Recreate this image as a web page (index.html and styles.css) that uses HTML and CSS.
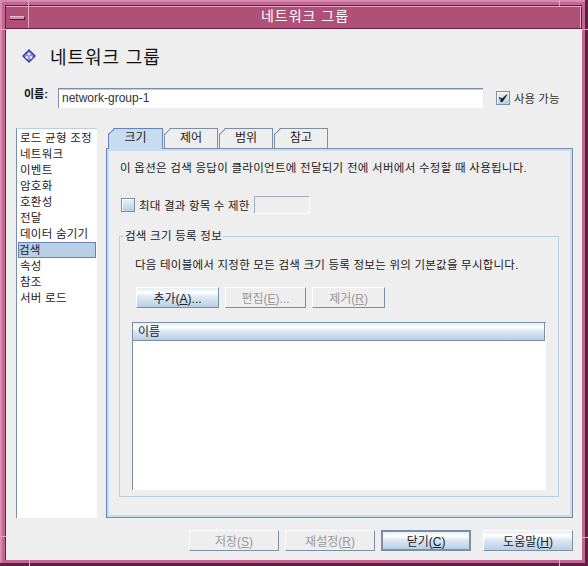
FILE: index.html
```html
<!DOCTYPE html>
<html lang="ko">
<head>
  <meta charset="UTF-8">
  <title>네트워크 그룹</title>
  <link rel="stylesheet" href="styles.css">
</head>
<body>

  <div class="window">
    <span class="tick tick-v" style="left:28px;top:0"></span>
    <span class="tick tick-v" style="left:559px;top:0"></span>
    <span class="tick tick-v" style="left:29px;top:560px"></span>
    <span class="tick tick-v" style="left:559px;top:560px"></span>
    <span class="tick tick-h" style="left:0;top:29px"></span>
    <span class="tick tick-h" style="left:582px;top:29px"></span>
    <span class="tick tick-h" style="left:0;top:536px"></span>
    <span class="tick tick-h" style="left:582px;top:537px"></span>

    <div class="titlebar">
      <div class="menu-box"><span class="menu-btn"></span></div>
      <div class="title">네트워크 그룹</div>
    </div>

    <div class="content">
      <div class="heading">
        <svg class="heading-icon" width="14" height="14" viewBox="0 0 14 14">
          <path d="M7 0L14 7L7 14L0 7Z" fill="#3c3ca8"/>
          <path d="M7 2L12 7L7 12L2 7Z" fill="#8e8ed8"/>
          <circle cx="7" cy="5" r="1.3" fill="#e8e8ff"/>
          <circle cx="5" cy="8.4" r="1.3" fill="#e8e8ff"/>
          <circle cx="9" cy="8.4" r="1.3" fill="#e8e8ff"/>
        </svg>
        <h1>네트워크 그룹</h1>
      </div>

      <div class="name-row">
        <label class="name-label">이름:</label>
        <div class="text-input name-input">network-group-1</div>
        <span class="check checked">
          <svg width="12" height="12" viewBox="0 0 12 12"><path d="M2 5L4 6L5 6.5L9.5 2.5L10.5 2.5L5.5 10L3.5 10L3.5 7.5L2 6.5Z" fill="#222"/></svg>
        </span>
        <span class="check-label">사용 가능</span>
      </div>

      <div class="main">
        <ul class="side-list">
          <li>로드 균형 조정</li>
          <li>네트워크</li>
          <li>이벤트</li>
          <li>암호화</li>
          <li>호환성</li>
          <li>전달</li>
          <li>데이터 숨기기</li>
          <li class="selected">검색</li>
          <li>속성</li>
          <li>참조</li>
          <li>서버 로드</li>
        </ul>

        <div class="tabs-area">
          <div class="tabs">
            <div class="tab active">크기</div>
            <div class="tab">제어</div>
            <div class="tab">범위</div>
            <div class="tab">참고</div>
          </div>

          <div class="panel">
            <p class="intro">이 옵션은 검색 응답이 클라이언트에 전달되기 전에 서버에서 수정할 때 사용됩니다.</p>

            <div class="limit-row">
              <span class="check"></span>
              <span class="limit-label">최대 결과 항목 수 제한</span>
              <div class="text-input limit-input"></div>
            </div>

            <fieldset class="group">
              <legend>검색 크기 등록 정보</legend>
              <p class="group-text">다음 테이블에서 지정한 모든 검색 크기 등록 정보는 위의 기본값을 무시합니다.</p>
              <div class="group-buttons">
                <button class="btn btn-add">추가(<u>A</u>)...</button>
                <button class="btn btn-edit" disabled>편집(<u>E</u>)...</button>
                <button class="btn btn-remove" disabled>제거(<u>R</u>)</button>
              </div>
              <div class="table">
                <div class="table-head">이름</div>
              </div>
            </fieldset>
          </div>
        </div>
      </div>

      <div class="footer">
        <button class="btn btn-foot" disabled>저장(<u>S</u>)</button>
        <button class="btn btn-foot" disabled>재설정(<u>R</u>)</button>
        <button class="btn btn-foot btn-default">닫기(<u>C</u>)</button>
        <button class="btn btn-foot btn-help">도움말(<u>H</u>)</button>
      </div>
    </div>
  </div>

</body>
</html>
```

FILE: styles.css
```css
* {
  box-sizing: border-box;
}

body {
  margin: 0;
  padding: 0;
  font-family: "Liberation Sans", "Noto Sans CJK KR", sans-serif;
  font-size: 12px;
  color: #222;
}

.window {
  position: relative;
  width: 588px;
  height: 566px;
  display: flex;
  flex-direction: column;
  padding: 5px 6px 6px 5px;
  background: #c4668f;
  box-shadow: inset -3px -3px 0 #5c2045, inset 2px 2px 0 #d68cb0;
  overflow: hidden;
}

.tick {
  position: absolute;
  background: #e0a8c4;
}

.tick-v {
  width: 1px;
  height: 6px;
}

.tick-h {
  width: 6px;
  height: 1px;
}

.titlebar {
  height: 24px;
  display: flex;
  flex-shrink: 0;
  background: #b04f78;
  border-top: 1px solid #5c2045;
  border-left: 1px solid #5c2045;
  border-bottom: 1px solid #5c2045;
}

.menu-box {
  width: 23px;
  border-right: 1px solid #e0a8c4;
  border-top: 1px solid #e0a8c4;
  display: flex;
  align-items: center;
  padding-left: 4px;
}

.menu-btn {
  width: 15px;
  height: 4px;
  background: #d68cb0;
  border-bottom: 1px solid #4a1a38;
  border-right: 1px solid #4a1a38;
  border-top: 1px solid #e8bcd2;
}

.title {
  flex: 1;
  border-top: 1px solid #e0a8c4;
  border-right: 1px solid #5c2045;
  box-shadow: inset -1px 0 0 #e0a8c4;
  text-align: center;
  color: #fff;
  font-size: 14px;
  line-height: 19px;
  letter-spacing: 1px;
}

.content {
  flex: 1;
  padding: 0 9px 0 10px;
  display: flex;
  flex-direction: column;
  background: #eeeeee;
  border-left: 1px solid #5c2045;
}

.heading {
  display: flex;
  align-items: center;
  gap: 14px;
  height: 24px;
  margin-top: 15px;
  padding-left: 6px;
}

.heading h1 {
  margin: 0;
  font-size: 18px;
  font-weight: normal;
  letter-spacing: 0.9px;
  color: #111;
}

.name-row {
  display: flex;
  align-items: center;
  height: 20px;
  margin-top: 20px;
}

.name-label {
  width: 42px;
  padding-left: 8px;
  margin-top: -10px;
  font-size: 11px;
  font-weight: bold;
  color: #111;
}

.text-input {
  background: #fff;
  border-top: 1px solid #7a8ea8;
  border-left: 1px solid #7a8ea8;
  box-shadow: inset 0 1px 0 #b8cfe5;
}

.name-input {
  width: 425px;
  height: 20px;
  padding: 1px 3px;
  line-height: 17px;
  font-size: 12px;
  color: #333;
}

.check {
  flex-shrink: 0;
  width: 14px;
  height: 14px;
  display: flex;
  align-items: center;
  justify-content: center;
  border: 1px solid #7a8ea8;
  background: linear-gradient(#eaf1f8, #b8cfe5);
  box-shadow: inset 1px 1px 0 #fff;
}

.name-row .check {
  margin-left: 13px;
}

.check-label {
  margin-left: 4px;
  font-size: 11.5px;
  color: #333;
}

.main {
  display: flex;
  margin-top: 20px;
  gap: 9px;
  height: 390px;
}

.side-list {
  width: 81px;
  margin: 0;
  padding: 1px 0 0 1px;
  list-style: none;
  background: #fff;
  border-top: 1px solid #b8cfe5;
  border-left: 1px solid #7a8ea8;
}

.side-list li {
  height: 16px;
  padding-left: 2px;
  line-height: 16px;
  font-size: 11.5px;
  letter-spacing: 0.25px;
  color: #222;
  white-space: nowrap;
}

.side-list li.selected {
  width: 78px;
  padding-left: 1px;
  background: #b8cfe5;
  outline: 1px solid #6382bf;
  outline-offset: -1px;
}

.tabs-area {
  flex: 1;
  display: flex;
  flex-direction: column;
}

.tabs {
  display: flex;
  height: 20px;
  padding-left: 2px;
  gap: 1px;
}

.tab {
  position: relative;
  width: 54px;
  height: 20px;
  text-align: center;
  line-height: 18px;
  font-size: 12px;
  color: #222;
  background: #eeeeee;
  border-top: 1px solid #7a8ea8;
  border-right: 1px solid #7a8ea8;
  border-left: 1px solid #7a8ea8;
  clip-path: polygon(6px 0, 100% 0, 100% 100%, 0 100%, 0 6px);
}

.tab::before {
  content: "";
  position: absolute;
  left: -2px;
  top: 2px;
  width: 9px;
  height: 1px;
  background: #7a8ea8;
  transform: rotate(-45deg);
}

.tab.active {
  width: 55px;
  background: #c7dcf0;
  border-color: #6382bf;
  border-bottom: none;
  z-index: 1;
  height: 21px;
}

.tab.active::before {
  background: #6382bf;
}

.panel {
  width: 467px;
  height: 370px;
  padding: 0 13px;
  border: 1px solid #7a8ea8;
  border-left-color: #6382bf;
  box-shadow: inset 2px 2px 0 #c7dcf0, inset -2px -2px 0 #c7dcf0;
}

.intro {
  margin: 11px 0 0;
  line-height: 16px;
  font-size: 11.5px;
  letter-spacing: 0.27px;
  white-space: nowrap;
}

.limit-row {
  display: flex;
  align-items: center;
  height: 18px;
  margin-top: 20px;
  padding-left: 1px;
}

.limit-label {
  margin-left: 4px;
  font-size: 11.5px;
  letter-spacing: 0.2px;
}

.limit-input {
  width: 56px;
  height: 18px;
  margin-left: 4px;
  background: #eeeeee;
  border: 1px solid #fff;
  border-top-color: #9fb0c4;
  border-left-color: #9fb0c4;
  box-shadow: none;
}

.group {
  width: 440px;
  height: 268px;
  margin: 15px 0 0 -1px;
  padding: 0 12px 12px 12px;
  border: 1px solid #b8cfe5;
  min-width: 0;
}

.group legend {
  padding: 0 1px;
  margin-left: -8px;
  line-height: 14px;
  font-size: 11.5px;
  letter-spacing: 0.25px;
}

.group-text {
  margin: 14px 0 0 3px;
  line-height: 16px;
  font-size: 11.5px;
  letter-spacing: 0.23px;
  white-space: nowrap;
}

.group-buttons {
  display: flex;
  gap: 6px;
  margin: 14px 0 0 4px;
}

.btn {
  height: 21px;
  padding: 0;
  font-family: inherit;
  font-size: 12px;
  color: #222;
  background: linear-gradient(#e4edf6 0, #fff 25%, #dfe9f3 45%, #b8cfe5 100%);
  border: 1px solid #fff;
  border-right-color: #7a8ea8;
  border-bottom-color: #7a8ea8;
}

.btn:disabled {
  color: #999;
  background: #eeeeee;
}

.btn-add {
  width: 83px;
}

.btn-edit {
  width: 81px;
}

.btn-remove {
  width: 73px;
}

.table {
  width: 414px;
  height: 168px;
  margin-top: 14px;
  background: #fff;
  border-top: 1px solid #7a8ea8;
  border-left: 1px solid #7a8ea8;
}

.table-head {
  width: 412px;
  height: 18px;
  padding-left: 5px;
  line-height: 19px;
  font-size: 12px;
  background: linear-gradient(#e4edf6 0, #fff 25%, #dfe9f3 45%, #b8cfe5 100%);
  border-right: 1px solid #7a8ea8;
  border-bottom: 1px solid #7a8ea8;
}

.footer {
  display: flex;
  margin-top: 12px;
  padding-left: 173px;
  gap: 6px;
}

.btn-foot {
  width: 90px;
}

.btn-default {
  border: 2px solid #7a8ea8;
  border-top-color: #7a8ea8;
}

.btn-help {
  margin-left: 6px;
}
```
